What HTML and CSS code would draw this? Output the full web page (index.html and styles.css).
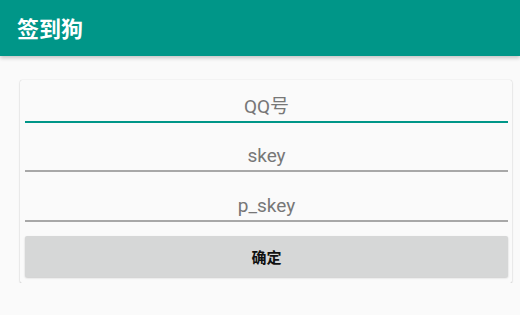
FILE: index.html
```html
<!DOCTYPE html>
<html lang="zh">
<head>
<meta charset="utf-8">
<link rel="stylesheet" href="styles.css">
</head>
<body>
<header class="appbar"><span class="title">签到狗</span></header>
<main class="card">
  <div class="field field-focus"><span class="hint">QQ号</span></div>
  <div class="field field-2"><span class="hint">skey</span></div>
  <div class="field field-3"><span class="hint">p_skey</span></div>
  <button class="btn">确定</button>
</main>
</body>
</html>
```
FILE: styles.css
```css
html, body {
  margin: 0;
  padding: 0;
  background: #fafafa;
  font-family: Roboto, "Noto Sans CJK SC", sans-serif;
}
.appbar {
  height: 56px;
  background: #009688;
  display: flex;
  align-items: center;
  padding-left: 17px;
  box-shadow: 0 2px 4px rgba(0,0,0,0.22);
  position: relative;
}
.title {
  color: #fff;
  font-family: "Noto Sans CJK SC", sans-serif;
  font-weight: 700;
  font-size: 22px;
  line-height: 24px;
  margin-top: -3px;
}
.card {
  margin: 24px 8px 0 20px;
  padding: 0 4px 6px 5px;
  background: #fafafa;
  border-radius: 2px;
  box-shadow: 0 1px 2px rgba(0,0,0,0.18), 0 0 1px rgba(0,0,0,0.2);
  display: flex;
  flex-direction: column;
}
.field {
  display: flex;
  align-items: flex-end;
  justify-content: center;
  border-bottom: 2px solid #a8a8a8;
  padding-bottom: 3px;
  box-sizing: border-box;
}
.field-focus {
  height: 43px;
  border-bottom-color: #009688;
}
.field-2 { height: 49px; }
.field-3 { height: 50px; }
.hint {
  color: #777;
  font-size: 19px;
  line-height: 22px;
}
.btn {
  margin-top: 14px;
  height: 41px;
  border: none;
  border-radius: 2px;
  background: #d6d7d7;
  box-shadow: 0 1px 2px rgba(0,0,0,0.2);
  font-family: "Noto Sans CJK SC", sans-serif;
  font-weight: 700;
  font-size: 15px;
  color: #111;
  padding: 0;
}
```
